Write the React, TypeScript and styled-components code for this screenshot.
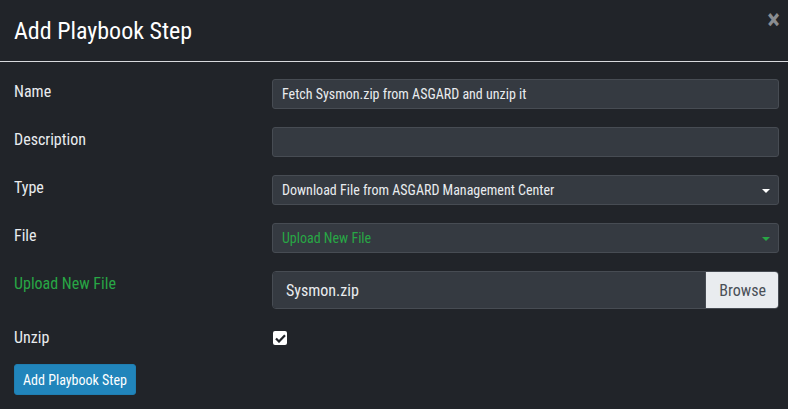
import React from "react";
import styled, { createGlobalStyle } from "styled-components";

const Global = createGlobalStyle`
  html, body { margin: 0; padding: 0; background: #212429; }
  body {
    font-family: Roboto, "Liberation Sans", sans-serif;
    font-stretch: condensed;
    color: #e9ecef;
  }
`;

const Modal = styled.div`
  width: 788px;
  height: 409px;
  background: #212429;
  overflow: hidden;
`;

const Header = styled.div`
  height: 62px;
  display: flex;
  align-items: center;
  justify-content: space-between;
  padding: 0 8px 0 14px;
  border-bottom: 1px solid #d8dadd;
  box-sizing: border-box;
  position: relative;
`;

const Title = styled.h4`
  margin: 0;
  font-size: 24px;
  font-weight: 400;
  color: #ffffff;
  line-height: 1;
`;

const Close = styled.span`
  position: absolute;
  right: 8px;
  top: 7px;
  font-size: 27px;
  font-weight: 700;
  color: #8a8d91;
  line-height: 1;
`;

const Body = styled.div`
  padding: 17px 9px 0 14px;
  display: flex;
  flex-direction: column;
`;

const Row = styled.div<{ $h?: number }>`
  display: grid;
  grid-template-columns: 258px 1fr;
  align-items: center;
  height: ${(p) => p.$h ?? 30}px;
  margin-bottom: 18px;
`;

const Label = styled.label<{ $green?: boolean; $top?: number }>`
  font-size: 16px;
  color: ${(p) => (p.$green ? "#28a745" : "#e9ecef")};
  align-self: start;
  line-height: 20px;
  padding-top: ${(p) => p.$top ?? 3}px;
`;

const Input = styled.div<{ $green?: boolean }>`
  height: 30px;
  box-sizing: border-box;
  background: #353a41;
  border: 1px solid #474c53;
  border-radius: 3px;
  padding: 0 9px;
  display: flex;
  align-items: center;
  font-size: 14px;
  color: ${(p) => (p.$green ? "#28a745" : "#e9ecef")};
  position: relative;
`;

const Caret = styled.span<{ $green?: boolean }>`
  position: absolute;
  right: 8px;
  top: 13px;
  width: 0;
  height: 0;
  border-left: 4px solid transparent;
  border-right: 4px solid transparent;
  border-top: 4px solid ${(p) => (p.$green ? "#28a745" : "#ffffff")};
`;

const FileGroup = styled.div`
  display: flex;
  height: 38px;
  box-sizing: border-box;
  border: 1px solid #474c53;
  border-radius: 4px;
  overflow: hidden;
`;

const FileName = styled.div`
  flex: 1;
  background: #353a41;
  display: flex;
  align-items: center;
  padding: 0 13px;
  font-size: 16px;
  color: #e9ecef;
`;

const Browse = styled.div`
  background: #e9ecef;
  color: #495057;
  font-size: 16px;
  display: flex;
  align-items: center;
  padding: 0 12px 0 13px;
  border-left: 1px solid #474c53;
`;

const Check = styled.span`
  width: 14px;
  height: 14px;
  background: #fff;
  border-radius: 2px;
  display: inline-flex;
  align-items: center;
  justify-content: center;
  margin-left: 1px;
`;

const Button = styled.button`
  align-self: flex-start;
  margin-top: -3px;
  height: 31px;
  padding: 0 8px;
  background: #2185bb;
  border: 1px solid #1f7eb1;
  border-radius: 3px;
  color: #fff;
  font-family: inherit;
  font-stretch: condensed;
  font-size: 14px;
`;

export default function App() {
  return (
    <Modal>
      <Global />
      <Header>
        <Title>Add Playbook Step</Title>
        <Close>×</Close>
      </Header>
      <Body>
        <Row>
          <Label>Name</Label>
          <Input>Fetch Sysmon.zip from ASGARD and unzip it</Input>
        </Row>
        <Row>
          <Label>Description</Label>
          <Input />
        </Row>
        <Row>
          <Label>Type</Label>
          <Input>
            Download File from ASGARD Management Center
            <Caret />
          </Input>
        </Row>
        <Row>
          <Label>File</Label>
          <Input $green>
            Upload New File
            <Caret $green />
          </Input>
        </Row>
        <Row $h={38}>
          <Label $green>Upload New File</Label>
          <FileGroup>
            <FileName>Sysmon.zip</FileName>
            <Browse>Browse</Browse>
          </FileGroup>
        </Row>
        <Row $h={22}>
          <Label $top={1}>Unzip</Label>
          <Check>
            <svg width="11" height="9" viewBox="0 0 11 9">
              <path d="M1 4.5 L4 7.5 L10 1.2" stroke="#212429" strokeWidth="2.2" fill="none" />
            </svg>
          </Check>
        </Row>
        <Button>Add Playbook Step</Button>
      </Body>
    </Modal>
  );
}
